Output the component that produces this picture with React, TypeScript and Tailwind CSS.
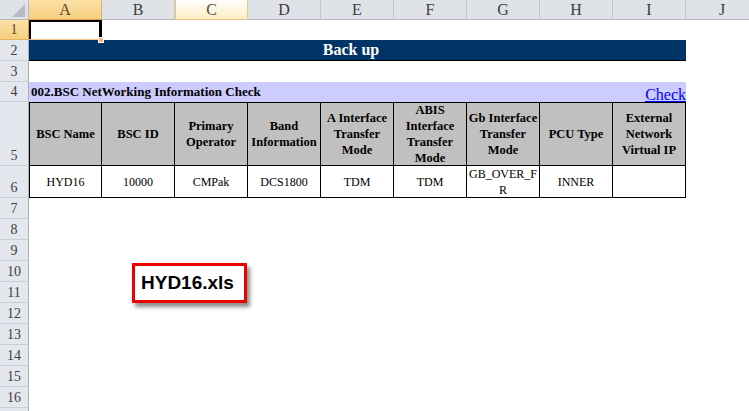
const columns = ["A", "B", "C", "D", "E", "F", "G", "H", "I", "J"];

const rowHeights: Record<number, string> = {
  1: "h-[20px]",
  2: "h-[21px]",
  3: "h-[21px]",
  4: "h-[20px]",
  5: "h-[64px]",
  6: "h-[32px]",
};

const tableHead = [
  ["BSC Name"],
  ["BSC ID"],
  ["Primary", "Operator"],
  ["Band", "Information"],
  ["A Interface", "Transfer", "Mode"],
  ["ABIS", "Interface", "Transfer", "Mode"],
  ["Gb Interface", "Transfer", "Mode"],
  ["PCU Type"],
  ["External", "Network", "Virtual IP"],
];

const tableData = [
  ["HYD16"],
  ["10000"],
  ["CMPak"],
  ["DCS1800"],
  ["TDM"],
  ["TDM"],
  ["GB_OVER_F", "R"],
  ["INNER"],
  [""],
];

function ColumnHeader({ label }: { label: string }) {
  let tone =
    "border-r-[#c2c7ce] border-b-[#b2b9c2] bg-[#dfe3e8] text-[#3d3d3d]";
  if (label === "A") {
    tone =
      "border-r-[#e3b463] border-b-[#e59b35] bg-gradient-to-b from-[#fbe0a6] to-[#f6cf80] text-[#5a4526]";
  } else if (label === "C") {
    tone =
      "border-r-[#ecc983] border-l border-l-[#ecc983] border-b-[#e7c27a] bg-gradient-to-b from-[#fffefb] to-[#fdeec6] text-[#5a4a33]";
  }
  return (
    <div
      className={`flex h-full w-[73px] shrink-0 items-center justify-center border-r border-b text-[16px] leading-none ${tone}`}
    >
      {label}
    </div>
  );
}

function RowHeader({ n }: { n: number }) {
  const active = n === 1;
  return (
    <div
      className={`flex h-full w-[29px] shrink-0 items-end justify-center border-r border-b pb-[2px] text-[14px] leading-none ${
        active
          ? "border-r-[#e59b35] border-b-[#e3b463] bg-gradient-to-b from-[#fbe0a6] to-[#f6cf80] text-[#5a4526]"
          : "border-r-[#a9b0ba] border-b-[#c9ced5] bg-[#e4e8ee] text-[#3d3d3d]"
      }`}
    >
      {n < 17 ? n : null}
    </div>
  );
}

function Lines({ lines }: { lines: string[] }) {
  return (
    <div className="text-center leading-[16px]">
      {lines.map((line, i) => (
        <div key={i}>{line}</div>
      ))}
    </div>
  );
}

function RowContent({ n }: { n: number }) {
  if (n === 1) {
    return (
      <div className="relative h-full w-[73px] shrink-0">
        <div className="absolute left-0 top-0 h-[20px] w-[73px] border-l-2 border-t-2 border-r-[3px] border-black" />
        <div className="absolute bottom-0 left-0 h-px w-[70px] bg-[#f3c08a]" />
        <div className="absolute -bottom-[3px] -right-[2px] h-[6px] w-[6px] border border-white bg-[#f0b77d]" />
      </div>
    );
  }
  if (n === 2) {
    return (
      <div className="flex h-full w-[657px] shrink-0 items-center justify-center border-b border-black bg-[#003366] pr-[13px] text-[16px] font-bold text-white">
        Back up
      </div>
    );
  }
  if (n === 4) {
    return (
      <div className="flex h-full w-[657px] shrink-0 items-center justify-between bg-[#ccccff] pl-[2px]">
        <span className="text-[13px] font-bold text-black">
          002.BSC NetWorking Information Check
        </span>
        <span className="pt-[5px] text-[16px] leading-none text-[#0000ff] underline">
          Check
        </span>
      </div>
    );
  }
  if (n === 5 || n === 6) {
    const cells = n === 5 ? tableHead : tableData;
    return (
      <>
        {cells.map((lines, i) => (
          <div
            key={i}
            className={`flex h-full w-[73px] shrink-0 items-center justify-center border-r border-b border-black text-black ${
              i === 0 ? "border-l" : ""
            } ${n === 5 ? "border-t bg-[#c0c0c0] text-[12.5px] font-bold" : "bg-white text-[12px]"}`}
          >
            <Lines lines={lines} />
          </div>
        ))}
      </>
    );
  }
  return null;
}

export default function App() {
  const rows = Array.from({ length: 17 }, (_, i) => i + 1);
  return (
    <div className="relative h-[411px] w-[749px] overflow-hidden bg-white font-['Liberation_Serif','Times_New_Roman',serif]">
      <div className="flex h-[20px]">
        <div className="relative h-full w-[29px] shrink-0 border-r border-b border-r-[#b2b9c2] border-b-[#b2b9c2] bg-[#dfe3e8]">
          <svg className="absolute right-[3px] bottom-[2px]" width="13" height="13" viewBox="0 0 13 13">
            <polygon points="13,0 13,13 0,13" fill="#b6bcc5" />
          </svg>
        </div>
        {columns.map((c) => (
          <ColumnHeader key={c} label={c} />
        ))}
      </div>
      {rows.map((n) => (
        <div key={n} className={`flex ${rowHeights[n] ?? "h-[21px]"}`}>
          <RowHeader n={n} />
          <RowContent n={n} />
        </div>
      ))}

      <div className="absolute left-[132px] top-[263px] flex h-[40px] w-[115px] items-center border-[3px] border-[#ee0000] bg-white pl-[6px] font-['Liberation_Sans',Arial,sans-serif] text-[19px] font-bold text-black shadow-[3px_4px_4px_rgba(0,0,0,0.45)]">
        HYD16.xls
      </div>
    </div>
  );
}
